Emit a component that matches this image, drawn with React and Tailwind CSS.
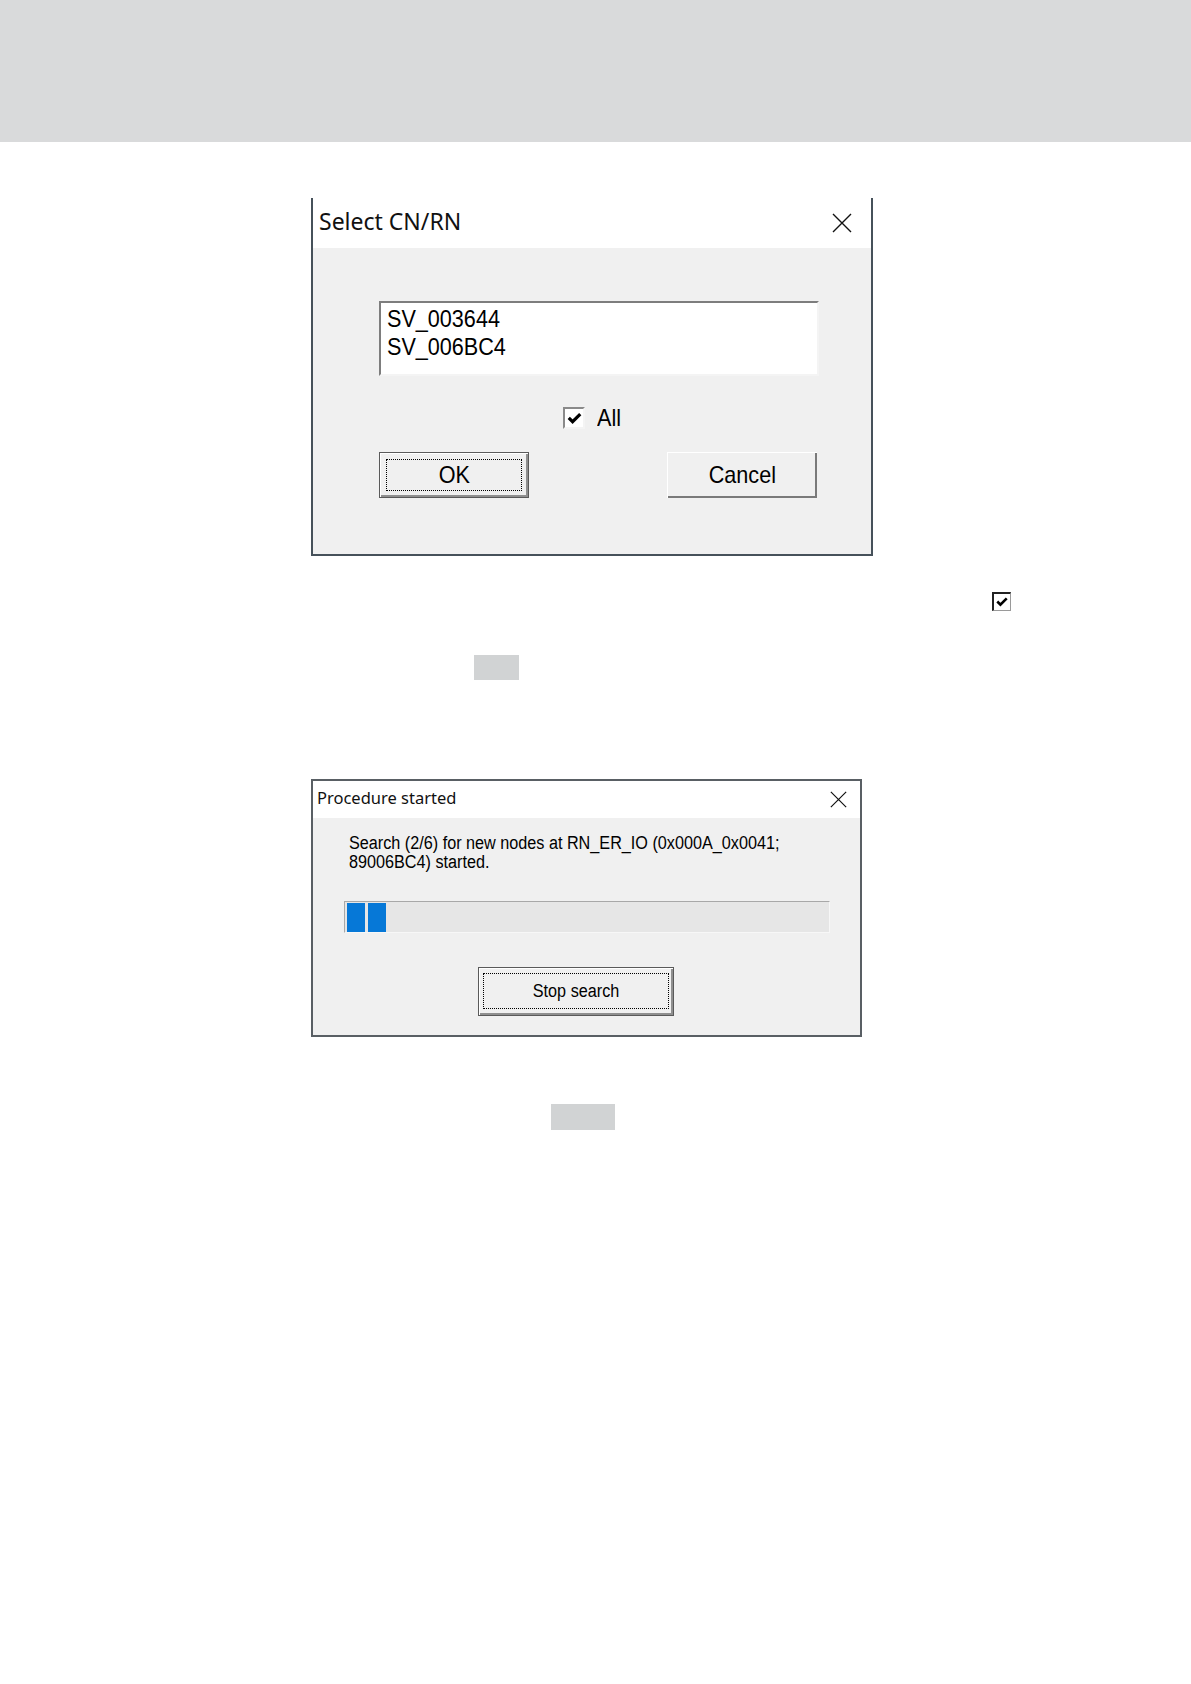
import React from "react";

function CloseX({ size, stroke = 1.4 }) {
  return (
    <svg width={size} height={size} viewBox="0 0 20 20" className="block">
      <path d="M1 1L19 19M19 1L1 19" stroke="#111" strokeWidth={stroke} fill="none" />
    </svg>
  );
}

function CheckMark({ size }) {
  return (
    <svg width={size} height={size} viewBox="0 0 16 16" className="block">
      <path d="M2.6 7.4L6.2 11L13.4 3.8" fill="none" stroke="#000" strokeWidth="3" strokeLinecap="butt" strokeLinejoin="miter" />
    </svg>
  );
}

export default function App() {
  return (
    <div className="w-[1191px] min-h-[1684px] bg-white font-['Liberation_Sans',Arial,sans-serif] text-black">
      <div className="h-[142px] bg-[#d9dadb]" />

      {/* Dialog 1 */}
      <div className="pl-[311px] pt-[56px]">
        <div className="w-[562px] h-[358px] border-l-2 border-r-2 border-b-2 border-[#46515a] bg-[#f0f0f0] flex flex-col">
          <div className="h-[50px] bg-white flex items-center justify-between pl-[6px] pr-[19px]">
            <span className="font-['Noto_Sans',sans-serif] text-[23px] leading-none -mt-[4px] text-[#111]">Select CN/RN</span>
            <CloseX size={20} />
          </div>
          <div className="flex-1 flex flex-col text-[24px]">
            <div className="ml-[66px] mt-[53px] w-[440px] h-[75px] bg-white border-2 border-t-[#7d7d7d] border-l-[#7d7d7d] border-r-[#f4f4f4] border-b-[#f4f4f4] pl-[6px] pt-[2px] leading-[28px]">
              <div className="origin-left scale-x-90 whitespace-nowrap">SV_003644</div>
              <div className="origin-left scale-x-90 whitespace-nowrap">SV_006BC4</div>
            </div>
            <div className="mt-[31px] ml-[250px] flex items-center gap-[12px] h-[22px]">
              <div className="w-[22px] h-[22px] bg-white border-2 border-t-[#8a8a8a] border-l-[#8a8a8a] border-r-[#f4f4f4] border-b-[#f4f4f4] flex items-center justify-center">
                <CheckMark size={17} />
              </div>
              <span className="leading-none inline-block origin-left scale-x-90">All</span>
            </div>
            <div className="mt-[23px] ml-[66px] flex gap-[138px]">
              <div className="w-[150px] h-[46px] bg-[#f0f0f0] border border-[#5a5a5a] shadow-[inset_1px_1px_0_#ffffff,inset_-2px_-2px_0_#8f8f8f] p-[6px]">
                <div className="w-full h-full border border-dotted border-black flex items-center justify-center leading-none">
                  <span className="inline-block scale-x-90">OK</span>
                </div>
              </div>
              <div className="w-[150px] h-[46px] bg-[#f0f0f0] shadow-[inset_1px_1px_0_#ffffff,inset_-2px_-2px_0_#7a7a7a] flex items-center justify-center leading-none">
                <span className="inline-block scale-x-90">Cancel</span>
              </div>
            </div>
          </div>
        </div>
      </div>

      {/* small checkbox placeholder */}
      <div className="mt-[36px] pl-[992px]">
        <div className="w-[19px] h-[19px] bg-white border-t-2 border-l-2 border-r border-b border-t-[#222] border-l-[#222] border-r-[#9a9a9a] border-b-[#9a9a9a] flex items-center justify-center">
          <CheckMark size={14} />
        </div>
      </div>

      {/* gray placeholder 1 */}
      <div className="mt-[44px] pl-[474px]">
        <div className="w-[45px] h-[25px] bg-[#d1d3d4]" />
      </div>

      {/* Dialog 2 */}
      <div className="mt-[99px] pl-[311px]">
        <div className="w-[551px] h-[258px] border-2 border-[#595f64] bg-[#f0f0f0] flex flex-col">
          <div className="h-[37px] bg-white flex items-center justify-between pl-[4px] pr-[13px]">
            <span className="font-['Noto_Sans',sans-serif] text-[16.5px] leading-none -mt-[2px] text-[#111]">Procedure started</span>
            <CloseX size={17} />
          </div>
          <div className="flex-1 flex flex-col text-[18px]">
            <div className="mt-[16px] pl-[36px] leading-[19px] whitespace-nowrap">
              <div className="origin-left scale-x-90">Search (2/6) for new nodes at RN_ER_IO (0x000A_0x0041;</div>
              <div className="origin-left scale-x-90">89006BC4) started.</div>
            </div>
            <div className="mt-[29px] ml-[31px] w-[486px] h-[32px] bg-[#e6e6e6] border border-t-[#a8a8a8] border-l-[#a8a8a8] border-r-[#f7f7f7] border-b-[#f7f7f7] flex gap-[3px] pl-[2px] pt-[1px]">
              <div className="w-[18px] h-[29px] bg-[#0678d7]" />
              <div className="w-[18px] h-[29px] bg-[#0678d7]" />
            </div>
            <div className="mt-[34px] ml-[165px] w-[196px] h-[49px] bg-[#f0f0f0] border border-[#5a5a5a] shadow-[inset_1px_1px_0_#ffffff,inset_-2px_-2px_0_#8f8f8f] px-[4px] pt-[5px] pb-[6px]">
              <div className="w-full h-full border border-dotted border-black flex items-center justify-center leading-none">
                <span className="inline-block scale-x-90">Stop search</span>
              </div>
            </div>
          </div>
        </div>
      </div>

      {/* gray placeholder 2 */}
      <div className="mt-[67px] pl-[551px]">
        <div className="w-[64px] h-[26px] bg-[#d1d3d4]" />
      </div>
    </div>
  );
}
